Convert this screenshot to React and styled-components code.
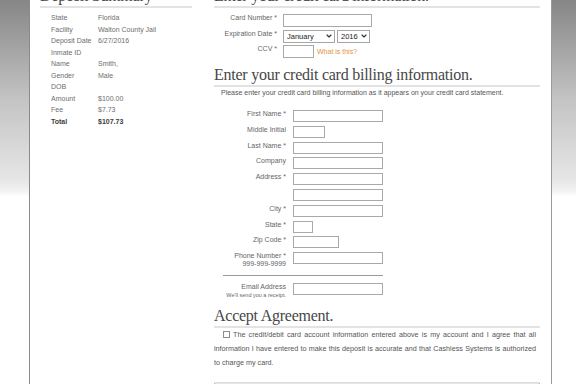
import styled, { createGlobalStyle } from "styled-components"
import { ChevronDown } from "lucide-react"

const Global = createGlobalStyle`
  html, body {
    margin: 0;
    padding: 0;
    background: #fff;
    overflow: hidden;
  }
  body {
    font-family: "Liberation Sans", Arial, sans-serif;
  }
  * { box-sizing: border-box; }
`

const Page = styled.div`
  display: flex;
  height: 384px;
  overflow: hidden;
`
const Side = styled.div`
  flex: none;
  width: ${p => p.$w}px;
  background: linear-gradient(#868686 0, #c4c4c4 100px, #e6e6e6 180px, #f4f4f4 192px, #fff 196px, #fff);
`
const Main = styled.div`
  flex: none;
  width: 523px;
  border-left: 1px solid #8a8a8a;
  border-right: 1px solid #999;
  padding: 0 11px 0 10px;
  display: grid;
  grid-template-columns: 152px 326px;
  column-gap: 22px;
  align-content: start;
`
const Column = styled.div`
  margin-top: -13px;
  min-width: 0;
`
const Heading = styled.h2`
  margin: ${p => p.$space || 0}px 0 0;
  font-family: "Liberation Serif", Georgia, serif;
  font-weight: normal;
  font-size: 16px;
  letter-spacing: -0.25px;
  line-height: 18px;
  color: #474747;
  padding-bottom: 1px;
  border-bottom: 2px solid #e3e3e3;
  white-space: nowrap;
`
const Summary = styled.dl`
  margin: 4px 0 0 11px;
  display: grid;
  grid-template-columns: 47px 1fr;
  font-size: 7px;
  line-height: 11.55px;
  color: #6e6e6e;
`
const Term = styled.dt`
  font-weight: ${p => (p.$bold ? 700 : 400)};
  color: ${p => (p.$bold ? "#3c3c3c" : "inherit")};
  white-space: nowrap;
`
const Value = styled.dd`
  margin: 0;
  min-height: 11.55px;
  font-weight: ${p => (p.$bold ? 700 : 400)};
  color: ${p => (p.$bold ? "#3c3c3c" : "inherit")};
  white-space: nowrap;
`
const FormGrid = styled.div`
  display: grid;
  grid-template-columns: ${p => p.$label}px 1fr;
  column-gap: ${p => p.$gap}px;
  row-gap: ${p => p.$row}px;
  align-items: start;
  margin-top: ${p => p.$space}px;
`
const Label = styled.label`
  text-align: right;
  font-size: 7px;
  line-height: 8px;
  color: #666;
  white-space: nowrap;
`
const Hint = styled.span`
  display: block;
  font-size: ${p => p.$size || 7}px;
  line-height: 8px;
  color: #666;
`
const Field = styled.div`
  display: flex;
  align-items: center;
  gap: ${p => p.$gap || 3}px;
`
const Input = styled.input`
  display: block;
  width: ${p => p.$w}px;
  height: ${p => p.$h || 12}px;
  margin: 0;
  padding: 0;
  border: 1px solid #a9a9a9;
  background: #fff;
`
const Select = styled.div`
  width: ${p => p.$w}px;
  height: 13px;
  border: 1px solid #a6a6a6;
  background: #fff;
  display: flex;
  align-items: center;
  justify-content: space-between;
  padding: 0 1px 0 3px;
  font-size: 7.5px;
  color: #222;
  svg {
    width: 8px;
    height: 8px;
    stroke-width: 3.5;
    color: #333;
  }
`
const Help = styled.a`
  font-size: 7px;
  color: #e59241;
  text-decoration: none;
`
const Note = styled.p`
  margin: 1.5px 0 0 7px;
  font-size: 7px;
  line-height: 10px;
  color: #555;
  white-space: nowrap;
`
const Rule = styled.hr`
  grid-column: 1 / -1;
  width: 160px;
  margin: 3px 0 3px 9px;
  border: 0;
  border-top: 1px solid #9a9a9a;
`
const Agreement = styled.p`
  margin: 0;
  padding-right: 4px;
  text-indent: 9px;
  font-size: 7.2px;
  line-height: 14px;
  color: #555;
  text-align: justify;
`
const Check = styled.input`
  appearance: none;
  width: 7px;
  height: 7px;
  margin: 0 3px 0 0;
  border: 1px solid #8c8c8c;
  background: #fff;
  vertical-align: -1px;
`
const SubmitBar = styled.div`
  margin-top: 11.6px;
  height: 14px;
  border: 1px solid #dcdcdc;
  border-left-color: #e3a25a;
  border-right-color: #e3a25a;
  border-radius: 2px;
  background: #e6e6e6;
`

const summary = [
  ["State", "Florida"],
  ["Facility", "Walton County Jail"],
  ["Deposit Date", "6/27/2016"],
  ["Inmate ID", ""],
  ["Name", "Smith,"],
  ["Gender", "Male"],
  ["DOB", ""],
  ["Amount", "$100.00"],
  ["Fee", "$7.73"],
]

const billing = [
  ["First Name *", 90],
  ["Middle Initial", 32],
  ["Last Name *", 90],
  ["Company", 90],
  ["Address *", 90],
  ["", 90],
  ["City *", 90],
  ["State *", 20],
  ["Zip Code *", 46],
]

export default function App() {
  return (
    <>
      <Global />
      <Page>
        <Side $w={29} />
        <Main>
          <Column>
            <Heading>Deposit Summary</Heading>
            <Summary>
              {summary.map(([k, v]) => (
                <>
                  <Term key={k}>{k}</Term>
                  <Value key={k + "v"}>{v}</Value>
                </>
              ))}
              <Term $bold>Total</Term>
              <Value $bold>$107.73</Value>
            </Summary>
          </Column>

          <Column>
            <Heading>Enter your credit card information.</Heading>
            <FormGrid $label={63} $gap={6} $row={2.5} $space={6}>
              <Label>Card Number *</Label>
              <Field>
                <Input $w={89} $h={13} />
              </Field>
              <Label>Expiration Date *</Label>
              <Field $gap={2}>
                <Select $w={52}>
                  January <ChevronDown />
                </Select>
                <Select $w={33}>
                  2016 <ChevronDown />
                </Select>
              </Field>
              <Label>CCV *</Label>
              <Field>
                <Input $w={31} $h={13} />
                <Help>What is this?</Help>
              </Field>
            </FormGrid>

            <Heading $space={7.6}>Enter your credit card billing information.</Heading>
            <Note>
              Please enter your credit card billing information as it appears on your credit card statement.
            </Note>
            <FormGrid $label={72} $gap={7} $row={3.8} $space={12}>
              {billing.map(([label, w], i) => (
                <>
                  <Label key={"l" + i}>{label}</Label>
                  <Field key={"f" + i}>
                    <Input $w={w} />
                  </Field>
                </>
              ))}
              <Label>
                Phone Number *<Hint>999-999-9999</Hint>
              </Label>
              <Field>
                <Input $w={90} />
              </Field>
              <Rule />
              <Label>
                Email Address<Hint $size={5.5}>We'll send you a receipt.</Hint>
              </Label>
              <Field>
                <Input $w={90} />
              </Field>
            </FormGrid>

            <Heading $space={8.6}>Accept Agreement.</Heading>
            <Agreement>
              <Check type="checkbox" />
              The credit/debit card account information entered above is my account and I agree that all
              information I have entered to make this deposit is accurate and that Cashless Systems is
              authorized to charge my card.
            </Agreement>
            <SubmitBar />
          </Column>
        </Main>
        <Side $w={24} />
      </Page>
    </>
  )
}
